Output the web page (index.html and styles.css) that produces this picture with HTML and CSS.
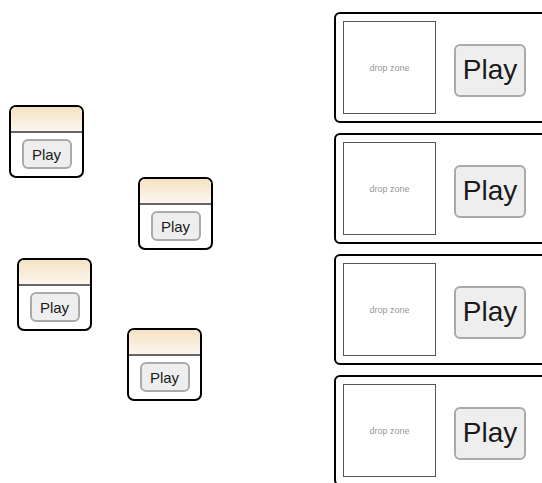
FILE: index.html
```html
<!DOCTYPE html>
<html lang="en">
<head>
    <meta charset="UTF-8">
    <meta name="viewport" content="width=device-width, initial-scale=1.0">
    <title>Drag and drop players</title>
    <link rel="stylesheet" href="styles.css">
</head>
<body>
    <div class="page">
        <!-- free canvas: cards sit where they were dropped -->
        <div class="canvas">
            <div class="player" style="left: 9px; top: 105px;">
                <div class="handle"></div>
                <div class="body"><button class="play">Play</button></div>
            </div>
            <div class="player" style="left: 138px; top: 177px;">
                <div class="handle"></div>
                <div class="body"><button class="play">Play</button></div>
            </div>
            <div class="player" style="left: 17px; top: 258px;">
                <div class="handle"></div>
                <div class="body"><button class="play">Play</button></div>
            </div>
            <div class="player" style="left: 127px; top: 328px;">
                <div class="handle"></div>
                <div class="body"><button class="play">Play</button></div>
            </div>
        </div>

        <div class="slots">
            <div class="slot">
                <div class="drop-zone">drop zone</div>
                <button class="play big">Play</button>
            </div>
            <div class="slot">
                <div class="drop-zone">drop zone</div>
                <button class="play big">Play</button>
            </div>
            <div class="slot">
                <div class="drop-zone">drop zone</div>
                <button class="play big">Play</button>
            </div>
            <div class="slot">
                <div class="drop-zone">drop zone</div>
                <button class="play big">Play</button>
            </div>
        </div>
    </div>
</body>
</html>
```

FILE: styles.css
```css
body {
    margin: 0;
    font-family: "Liberation Sans", Arial, sans-serif;
    background: #fff;
    overflow: hidden;
}
.page {
    display: flex;
    height: 483px;
    overflow: hidden;
}
.canvas {
    position: relative;
    width: 334px;
    flex-shrink: 0;
}
.player {
    position: absolute;
    width: 71px;
    border: 2px solid #000;
    border-radius: 7px;
    overflow: hidden;
    background: #fff;
}
.player .handle {
    height: 24px;
    background: linear-gradient(#f5e2c3, #fcf6ee);
    border-bottom: 2px solid #666;
}
.player .body {
    padding: 6px 0 7px;
    text-align: center;
}
.play {
    width: 50px;
    height: 30px;
    padding: 0;
    font-family: "Liberation Sans", Arial, sans-serif;
    font-size: 15px;
    color: #1a1a1a;
    background: #eee;
    border: 2px solid #aaa;
    border-radius: 6px;
    display: inline-block;
    vertical-align: top;
}
.slots {
    padding-top: 12px;
    display: flex;
    flex-direction: column;
    gap: 10px;
    overflow: hidden;
}
.slot {
    display: flex;
    align-items: center;
    gap: 18px;
    width: 250px;
    height: 107px;
    padding: 0 7px;
    border: 2px solid #000;
    border-radius: 6px;
    flex-shrink: 0;
}
.drop-zone {
    width: 91px;
    height: 91px;
    border: 1px solid #555;
    display: flex;
    align-items: center;
    justify-content: center;
    font-size: 9px;
    color: #999;
    flex-shrink: 0;
}
.play.big {
    width: 72px;
    height: 53px;
    font-size: 28px;
    margin-top: 5px;
}
```
